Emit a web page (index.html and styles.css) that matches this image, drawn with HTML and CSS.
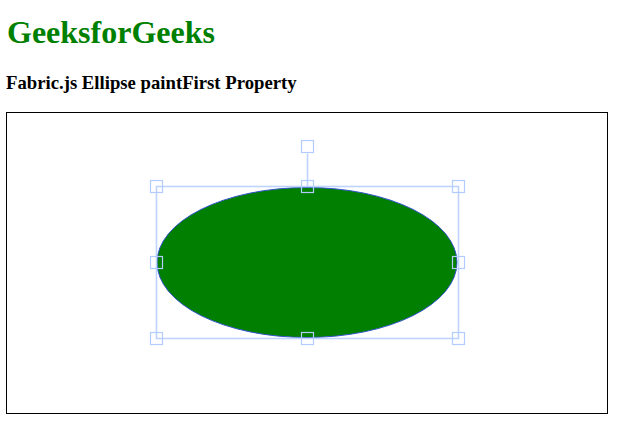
FILE: index.html
```html
<!DOCTYPE html>
<html>
<head>
<meta charset="utf-8">
<link rel="stylesheet" href="styles.css">
</head>
<body>
<h1 class="title">GeeksforGeeks</h1>
<h3 class="subtitle">Fabric.js Ellipse paintFirst Property</h3>
<div class="canvas">
  <svg class="scene" width="600" height="300" viewBox="0 0 600 300">
    <ellipse cx="300" cy="149.5" rx="150" ry="75" fill="#007f00" stroke="#3355cc" stroke-width="1"/>
    <g fill="none" stroke="rgb(190,212,255)" stroke-width="1.6">
      <rect x="149.5" y="73.5" width="302" height="152"/>
      <line x1="300.5" y1="73.5" x2="300.5" y2="40.5"/>
    </g>
    <g fill="none" stroke="rgb(178,204,255)" stroke-width="1.2">
      <rect x="294.5" y="27.5" width="12" height="12"/>
      <rect x="143.5" y="67.5" width="12" height="12"/>
      <rect x="294.5" y="67.5" width="12" height="12"/>
      <rect x="445.5" y="67.5" width="12" height="12"/>
      <rect x="143.5" y="143.5" width="12" height="12"/>
      <rect x="445.5" y="143.5" width="12" height="12"/>
      <rect x="143.5" y="219.5" width="12" height="12"/>
      <rect x="294.5" y="219.5" width="12" height="12"/>
      <rect x="445.5" y="219.5" width="12" height="12"/>
    </g>
  </svg>
</div>
</body>
</html>
```
FILE: styles.css
```css
body {
  margin: 6px;
  font-family: "Liberation Serif", "Times New Roman", serif;
}
.title {
  color: green;
  font-size: 32px;
  margin: 8px 0 21px 1px;
}
.subtitle {
  font-size: 18.72px;
  margin: 18px 0 18px 0;
}
.canvas {
  width: 600px;
  height: 300px;
  border: 1px solid #000;
}
.scene {
  display: block;
}
```
